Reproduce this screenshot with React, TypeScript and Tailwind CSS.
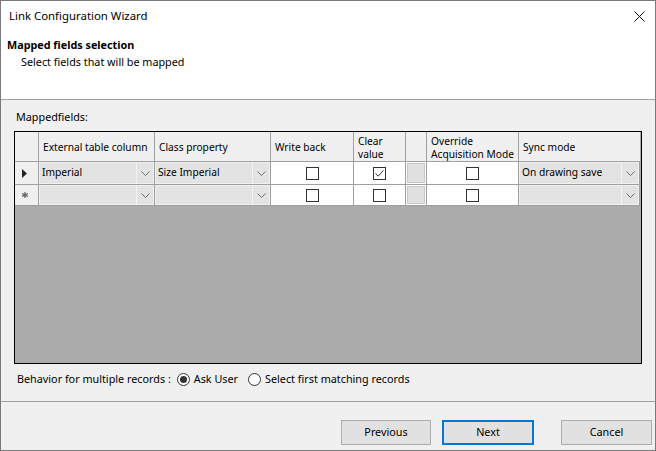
import React from 'react';

const cols = 'grid-cols-[24px_116px_116px_83px_52px_21px_92px_121px]';

function Chevron() {
  return (
    <svg width="9" height="5" viewBox="0 0 9 5" className="text-[#6d6d6d]">
      <path d="M0.5 0.5 L4.5 4.5 L8.5 0.5" fill="none" stroke="currentColor" strokeWidth="1" />
    </svg>
  );
}

function Combo({ value }: { value?: string }) {
  return (
    <div className="h-full border-r border-b border-[#a0a0a0] bg-[#f0f0f0] p-px">
      <div className="flex h-full bg-[#e3e3e3]">
        <div className="flex-1 flex items-center pl-[2px] truncate">{value}</div>
        <div className="w-[17px] flex items-center justify-center border-l border-[#f3f3f3]">
          <Chevron />
        </div>
      </div>
    </div>
  );
}

function Check({ checked }: { checked?: boolean }) {
  return (
    <div className="h-full bg-white border-r border-b border-[#a0a0a0] flex items-center justify-center">
      <div className="w-[13px] h-[13px] border border-[#333] bg-white flex items-center justify-center">
        {checked && (
          <svg width="11" height="11" viewBox="0 0 11 11">
            <path d="M1.5 5.5 L4.2 8.2 L9.5 2.5" fill="none" stroke="#333" strokeWidth="1" />
          </svg>
        )}
      </div>
    </div>
  );
}

function ButtonCell() {
  return (
    <div className="h-full border-r border-b border-[#a0a0a0] bg-white p-px">
      <div className="h-full bg-[#e1e1e1] border border-[#c8c8c8]" />
    </div>
  );
}

function HeaderCell({ children, last }: { children?: React.ReactNode; last?: boolean }) {
  return (
    <div
      className={
        'h-full bg-[#f0f0f0] border-b border-[#a0a0a0] flex items-center pl-[4px] pt-[2px] overflow-hidden ' +
        (last ? '' : 'border-r')
      }
    >
      <span className="block leading-[13px] whitespace-nowrap">{children}</span>
    </div>
  );
}

function Radio({ checked, label }: { checked?: boolean; label: string }) {
  return (
    <label className="flex items-center gap-[4px]">
      <span className="w-[13px] h-[13px] rounded-full border border-[#333] bg-white flex items-center justify-center">
        {checked && <span className="w-[7px] h-[7px] rounded-full bg-[#333]" />}
      </span>
      <span>{label}</span>
    </label>
  );
}

export default function App() {
  return (
    <div className="w-[656px] h-[451px] border border-[#7a7a7a] bg-[#f0f0f0] flex flex-col text-[10.8px] text-black font-['Segoe_UI','Noto_Sans',sans-serif] overflow-hidden">
      <div className="h-[99px] bg-white border-b border-[#a0a0a0] flex flex-col">
        <div className="h-[30px] flex items-center justify-between pl-[8px] pr-[10px] text-[11.4px]">
          <span>Link Configuration Wizard</span>
          <svg width="11" height="11" viewBox="0 0 11 11">
            <path d="M0.5 0.5 L10.5 10.5 M10.5 0.5 L0.5 10.5" stroke="#111" strokeWidth="1" />
          </svg>
        </div>
        <div className="mt-[6px] pl-[6px] font-bold leading-[16px]">Mapped fields selection</div>
        <div className="pl-[20px] leading-[17px]">Select fields that will be mapped</div>
      </div>

      <div className="flex-1 flex flex-col pl-[13px] pr-[13px]">
        <div className="mt-[9px] pl-[2px] leading-[16px]">Mappedfields:</div>
        <div className="mt-[6px] w-[628px] h-[233px] border border-black bg-[#ababab] text-[10.2px]">
          <div className={'grid h-[30px] ' + cols}>
            <HeaderCell />
            <HeaderCell>External table column</HeaderCell>
            <HeaderCell>Class property</HeaderCell>
            <HeaderCell>Write back</HeaderCell>
            <HeaderCell>
              Clear
              <br />
              value
            </HeaderCell>
            <HeaderCell />
            <HeaderCell>
              Override
              <br />
              Acquisition Mode
            </HeaderCell>
            <HeaderCell last>Sync mode</HeaderCell>
          </div>
          <div className={'grid h-[23px] ' + cols}>
            <div className="h-full bg-[#f0f0f0] border-r border-b border-[#a0a0a0] flex items-center pl-[7px]">
              <svg width="5" height="9" viewBox="0 0 5 9">
                <path d="M0 0 L5 4.5 L0 9 Z" fill="#222" />
              </svg>
            </div>
            <Combo value="Imperial" />
            <Combo value="Size Imperial" />
            <Check />
            <Check checked />
            <ButtonCell />
            <Check />
            <Combo value="On drawing save" />
          </div>
          <div className={'grid h-[21px] ' + cols}>
            <div className="h-full bg-[#f0f0f0] border-r border-b border-[#a0a0a0] flex items-center pl-[7px]">
              <svg width="6" height="6" viewBox="0 0 6 6">
                <path d="M3 0 V6 M0 1.5 L6 4.5 M6 1.5 L0 4.5" stroke="#666" strokeWidth="1.3" />
              </svg>
            </div>
            <Combo />
            <Combo />
            <Check />
            <Check />
            <ButtonCell />
            <Check />
            <Combo />
          </div>
        </div>
        <div className="mt-[7px] pl-[3px] flex items-center h-[16px]">
          <span className="mr-[6px]">Behavior for multiple records :</span>
          <Radio checked label="Ask User" />
          <span className="w-[10px]" />
          <Radio label="Select first matching records" />
        </div>
      </div>

      <div className="h-[49px] border-t border-[#a0a0a0] flex items-start pt-[18px] pl-[340px]">
        <button className="w-[90px] h-[25px] bg-[#e1e1e1] border border-[#adadad]">Previous</button>
        <button className="ml-[11px] w-[92px] h-[25px] bg-[#e1e1e1] border-2 border-[#0078d7]">Next</button>
        <button className="ml-[27px] w-[91px] h-[25px] bg-[#e1e1e1] border border-[#adadad]">Cancel</button>
      </div>
    </div>
  );
}
